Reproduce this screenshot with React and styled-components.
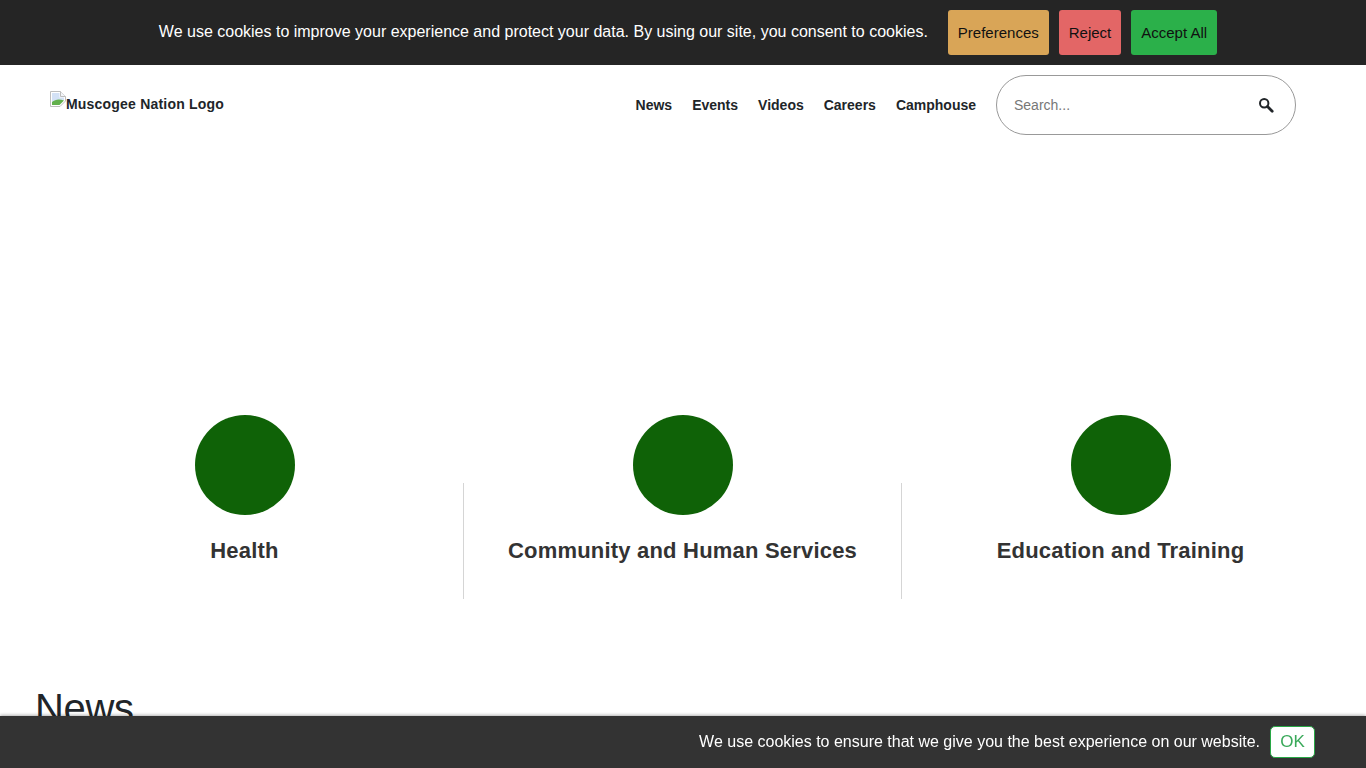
import styled, { createGlobalStyle } from "styled-components";

const GlobalStyle = createGlobalStyle`
  html, body {
    margin: 0;
    padding: 0;
    background: #fff;
    font-family: "Liberation Sans", Arial, sans-serif;
    color: #212529;
    overflow: hidden;
  }
  * {
    box-sizing: border-box;
  }
`;

const CookieBar = styled.div`
  height: 65px;
  background: #252525;
  display: flex;
  align-items: center;
  justify-content: center;
  gap: 10px;
  padding-left: 10px;
`;

const CookieText = styled.p`
  margin: 0 10px 0 0;
  color: #fff;
  font-size: 16px;
  position: relative;
  top: -1px;
`;

const CookieButton = styled.button`
  height: 45px;
  padding: 0 10px;
  border: 0;
  border-radius: 3px;
  background: ${(p) => p.$bg};
  color: #111;
  font-family: inherit;
  font-size: 15px;
`;

const Header = styled.header`
  height: 80px;
  padding: 0 70px 0 50px;
  display: flex;
  align-items: center;
  justify-content: space-between;
`;

const Logo = styled.a`
  display: flex;
  align-items: flex-start;
  font-size: 14px;
  font-weight: 700;
  color: #212529;
  letter-spacing: 0.2px;
  line-height: 16px;
  position: relative;
  top: -1px;

  svg {
    flex: none;
    position: relative;
    top: -5px;
  }
`;

const Right = styled.div`
  display: flex;
  align-items: center;
  gap: 20px;
`;

const Nav = styled.nav`
  display: flex;
  gap: 20px;
`;

const NavLink = styled.a`
  font-size: 14px;
  font-weight: 700;
  color: #212529;
`;

const SearchBox = styled.div`
  width: 300px;
  height: 60px;
  border: 1px solid #999;
  border-radius: 30px;
  display: flex;
  align-items: center;
  justify-content: space-between;
  padding: 0 21px 0 17px;
`;

const SearchInput = styled.input`
  border: 0;
  outline: 0;
  width: 200px;
  padding: 0;
  font-family: inherit;
  font-size: 14px;
  color: #212529;

  &::placeholder {
    color: #777;
    opacity: 1;
  }
`;

const Cards = styled.section`
  margin: 338px 26px 0;
  display: grid;
  grid-template-columns: repeat(3, 438px);
`;

const Card = styled.div`
  height: 116px;
  border-right: ${(p) => (p.$last ? "0" : "1px solid #d5d5d5")};
  display: flex;
  flex-direction: column;
  align-items: center;
  padding-right: ${(p) => (p.$last ? "1px" : "0")};
`;

const Circle = styled.div`
  flex: none;
  width: 100px;
  height: 100px;
  margin-top: -68px;
  border-radius: 50%;
  background: #0f6207;
`;

const CardTitle = styled.h3`
  margin: 22px 0 0;
  font-size: 22px;
  line-height: 27px;
  font-weight: 700;
  color: #333;
  letter-spacing: 0.2px;
  white-space: nowrap;
`;

const NewsTitle = styled.h2`
  margin: 85px 0 0 35px;
  font-size: 40px;
  line-height: 48px;
  font-weight: 400;
  letter-spacing: -0.3px;
  color: #212529;
`;

const NoticeBar = styled.div`
  position: fixed;
  left: 0;
  right: 0;
  bottom: 0;
  height: 52px;
  background: #333;
  box-shadow: 0 -1px 3px rgba(0, 0, 0, 0.3);
  display: flex;
  align-items: center;
  justify-content: flex-end;
  gap: 10px;
  padding-right: 51px;
`;

const NoticeText = styled.span`
  color: #fff;
  font-size: 16px;
`;

const OkButton = styled.button`
  width: 45px;
  height: 32px;
  padding: 0;
  border: 1px solid #28a745;
  border-radius: 5px;
  background: #fff;
  color: #3aa95a;
  font-family: inherit;
  font-size: 17px;
`;

function BrokenImage() {
  return (
    <svg width="16" height="16" viewBox="0 0 16 16">
      <path d="M0.5 0.5H10.5L15.5 5.5V10L10 15.5H0.5Z" fill="#fff" stroke="#bdbdbd" />
      <path d="M10.5 0.5V5.5H15.5" fill="#f2f4f8" stroke="#bdbdbd" />
      <path d="M2 2H9.5V6.5H14V9L2 11Z" fill="#d3e1f5" />
      <path d="M2 14V11C5 8.5 9 7.5 14 9.5L9.5 14Z" fill="#62b04c" />
    </svg>
  );
}

function SearchIcon() {
  return (
    <svg width="16" height="16" viewBox="0 0 16 16" fill="none" stroke="#212529">
      <circle cx="6.2" cy="6.2" r="4.2" strokeWidth="2" />
      <path d="M9.5 9.5L14.2 14.2" strokeWidth="2.8" strokeLinecap="round" />
    </svg>
  );
}

export default function App() {
  return (
    <>
      <GlobalStyle />
      <CookieBar>
        <CookieText>
          We use cookies to improve your experience and protect your data. By
          using our site, you consent to cookies.
        </CookieText>
        <CookieButton $bg="#d9a557">Preferences</CookieButton>
        <CookieButton $bg="#e36666">Reject</CookieButton>
        <CookieButton $bg="#2bb04a">Accept All</CookieButton>
      </CookieBar>
      <Header>
        <Logo>
          <BrokenImage />
          Muscogee Nation Logo
        </Logo>
        <Right>
          <Nav>
            <NavLink>News</NavLink>
            <NavLink>Events</NavLink>
            <NavLink>Videos</NavLink>
            <NavLink>Careers</NavLink>
            <NavLink>Camphouse</NavLink>
          </Nav>
          <SearchBox>
            <SearchInput placeholder="Search..." />
            <SearchIcon />
          </SearchBox>
        </Right>
      </Header>
      <Cards>
        <Card>
          <Circle />
          <CardTitle>Health</CardTitle>
        </Card>
        <Card>
          <Circle />
          <CardTitle>Community and Human Services</CardTitle>
        </Card>
        <Card $last>
          <Circle />
          <CardTitle>Education and Training</CardTitle>
        </Card>
      </Cards>
      <NewsTitle>News</NewsTitle>
      <NoticeBar>
        <NoticeText>
          We use cookies to ensure that we give you the best experience on our
          website.
        </NoticeText>
        <OkButton>OK</OkButton>
      </NoticeBar>
    </>
  );
}
